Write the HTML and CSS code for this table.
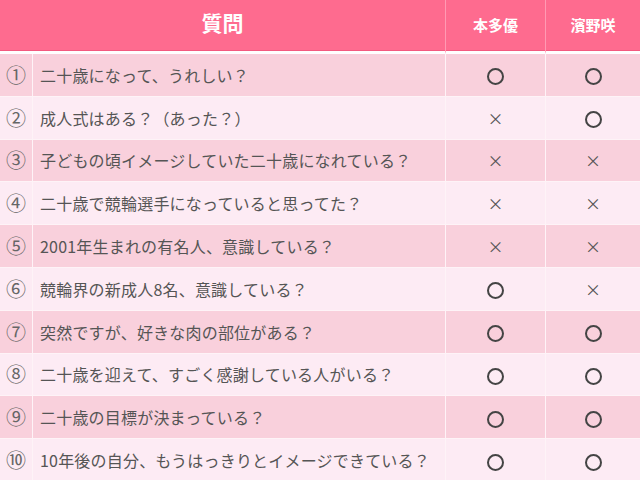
FILE: index.html
```html
<!DOCTYPE html>
<html lang="ja">
<head>
<meta charset="UTF-8">
<title>質問</title>
<link rel="stylesheet" href="styles.css">
</head>
<body>
	<table class="qa">
		<colgroup>
			<col class="c-no">
			<col class="c-q">
			<col class="c-a">
			<col class="c-b">
		</colgroup>
		<thead>
			<tr>
				<th colspan="2" class="title"><span class="lift">質問</span></th>
				<th><span class="lift small">本多優</span></th>
				<th class="last"><span class="lift small">濱野咲</span></th>
			</tr>
		</thead>
		<tbody>
			<tr><td class="no">①</td><td class="q">二十歳になって、うれしい？</td><td class="a"><span class="yes"></span></td><td class="a last"><span class="yes"></span></td></tr>
			<tr><td class="no">②</td><td class="q">成人式はある？（あった？）</td><td class="a">×</td><td class="a last"><span class="yes"></span></td></tr>
			<tr><td class="no">③</td><td class="q">子どもの頃イメージしていた二十歳になれている？</td><td class="a">×</td><td class="a last">×</td></tr>
			<tr><td class="no">④</td><td class="q">二十歳で競輪選手になっていると思ってた？</td><td class="a">×</td><td class="a last">×</td></tr>
			<tr><td class="no">⑤</td><td class="q">2001年生まれの有名人、意識している？</td><td class="a">×</td><td class="a last">×</td></tr>
			<tr><td class="no">⑥</td><td class="q">競輪界の新成人8名、意識している？</td><td class="a"><span class="yes"></span></td><td class="a last">×</td></tr>
			<tr><td class="no">⑦</td><td class="q">突然ですが、好きな肉の部位がある？</td><td class="a"><span class="yes"></span></td><td class="a last"><span class="yes"></span></td></tr>
			<tr><td class="no">⑧</td><td class="q">二十歳を迎えて、すごく感謝している人がいる？</td><td class="a"><span class="yes"></span></td><td class="a last"><span class="yes"></span></td></tr>
			<tr><td class="no">⑨</td><td class="q">二十歳の目標が決まっている？</td><td class="a"><span class="yes"></span></td><td class="a last"><span class="yes"></span></td></tr>
			<tr><td class="no">⑩</td><td class="q">10年後の自分、もうはっきりとイメージできている？</td><td class="a"><span class="yes"></span></td><td class="a last"><span class="yes"></span></td></tr>
		</tbody>
	</table>
</body>
</html>
```

FILE: styles.css
```css
body {
	margin: 0;
	background: #fdeaf3;
	font-family: "Noto Sans CJK JP", "Noto Sans", sans-serif;
}

.qa {
	width: 640px;
	table-layout: fixed;
	border-collapse: separate;
	border-spacing: 0;
}

.c-no { width: 33px; }
.c-q { width: 413px; }
.c-a { width: 100px; }
.c-b { width: 94px; }

.qa th {
	height: 51px;
	padding: 0;
	background: #fe6b8f;
	color: #fff;
	font-size: 15px;
	font-weight: bold;
	text-align: center;
	vertical-align: middle;
	border-right: 1px solid #ff9ab3;
	border-bottom: 3px solid #fff;
	box-shadow: inset 0 -1px 0 #f25a80;
}

.qa th.title {
	font-size: 21px;
}

.lift {
	display: block;
	line-height: 26px;
	margin-bottom: 8px;
}

.lift.small {
	line-height: 20px;
	margin-bottom: 2px;
}

.qa th.last,
.qa td.last {
	border-right: none;
}

.qa td {
	height: 41.8px;
	padding: 0;
	border-right: 1px solid #fef3f7;
	border-bottom: 1px solid #fef3f7;
	color: #555;
	font-size: 16px;
	line-height: 20px;
	vertical-align: middle;
}

.qa tbody tr:nth-child(odd) td {
	background: #f9d0dc;
}

.qa tbody tr:nth-child(even) td {
	background: #fdebf4;
}

.qa td.no {
	text-align: center;
	color: #666;
	font-size: 20px;
}

.q {
	padding-left: 7px !important;
	white-space: nowrap;
	letter-spacing: 0.2px;
}

.a {
	text-align: center;
	font-size: 17px;
	color: #555;
}

.yes {
	display: inline-block;
	width: 13px;
	height: 13px;
	border: 2px solid #444;
	border-radius: 50%;
	vertical-align: middle;
}
```
